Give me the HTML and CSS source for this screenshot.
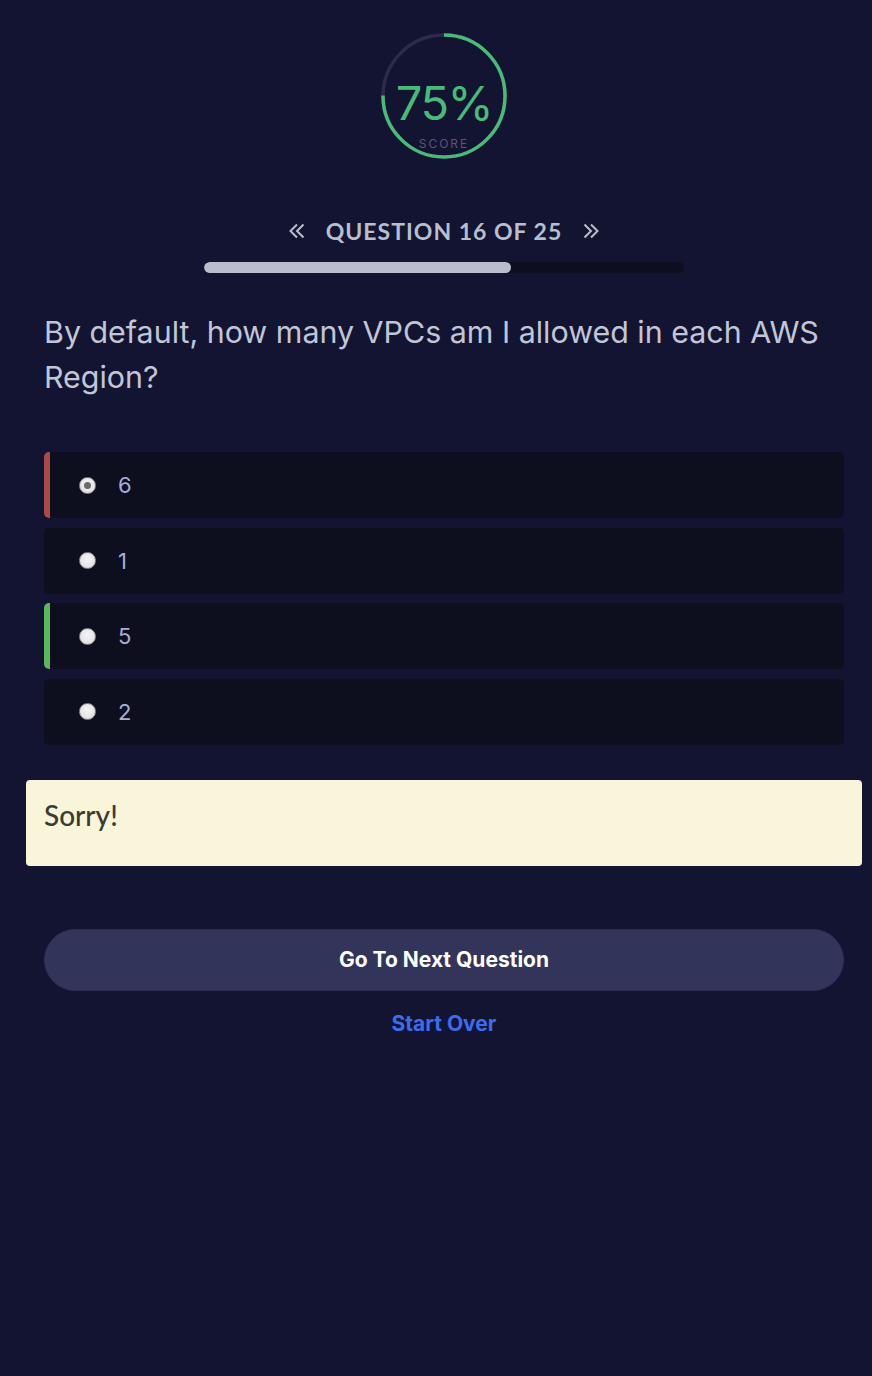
FILE: index.html
```html
<!DOCTYPE html>
<html lang="en">
<head>
<meta charset="utf-8">
<title>Quiz</title>
<link rel="stylesheet" href="styles.css">
</head>
<body>
<main class="quiz">
  <div class="score">
    <svg class="score-ring" width="130" height="130" viewBox="0 0 130 130">
      <circle cx="65" cy="65" r="61" fill="none" stroke="#2a2c4a" stroke-width="3.5"/>
      <circle cx="65" cy="65" r="61" fill="none" stroke="#48bb78" stroke-width="3.5"
        stroke-dasharray="287.46 383.27" transform="rotate(-90 65 65)"/>
    </svg>
    <div class="score-value">75%</div>
    <div class="score-label">SCORE</div>
  </div>

  <div class="nav">
    <svg class="chev" width="18" height="18" viewBox="0 0 18 18"><path d="M9 2.5 L2.5 9 L9 15.5 M15.5 2.5 L9 9 L15.5 15.5" fill="none" stroke="#b8bfcc" stroke-width="2"/></svg>
    <span class="nav-title">QUESTION 16 OF 25</span>
    <svg class="chev" width="18" height="18" viewBox="0 0 18 18"><path d="M2.5 2.5 L9 9 L2.5 15.5 M9 2.5 L15.5 9 L9 15.5" fill="none" stroke="#b8bfcc" stroke-width="2"/></svg>
  </div>
  <div class="progress"><div class="progress-fill" style="width:64%"></div></div>

  <h1 class="question">By default, how many VPCs am I allowed in each AWS Region?</h1>

  <ul class="options">
    <li class="option wrong"><span class="radio checked"></span><span class="opt-text">6</span></li>
    <li class="option"><span class="radio"></span><span class="opt-text">1</span></li>
    <li class="option right"><span class="radio"></span><span class="opt-text">5</span></li>
    <li class="option"><span class="radio"></span><span class="opt-text">2</span></li>
  </ul>

  <div class="feedback">Sorry!</div>

  <button class="next">Go To Next Question</button>
  <a class="restart" href="#">Start Over</a>
</main>
</body>
</html>
```

FILE: styles.css
```css
html, body {
  margin: 0;
  padding: 0;
  background: #131431;
  min-height: 100%;
}
body {
  font-family: Inter, "Noto Sans", sans-serif;
  color: #c1c6d6;
}
.quiz {
  display: flex;
  flex-direction: column;
  padding: 31px 28px 0 44px;
  width: 800px;
}
.score {
  position: relative;
  align-self: center;
  width: 130px;
  height: 130px;
}
.score-ring {
  display: block;
}
.score-value {
  position: absolute;
  left: 0;
  right: 0;
  top: 44px;
  text-align: center;
  font-size: 47px;
  font-weight: 400;
  line-height: 56px;
  color: #48bb78;
  letter-spacing: -1.5px;
}
.score-label {
  position: absolute;
  left: 0;
  right: 0;
  top: 105px;
  text-align: center;
  font-size: 12px;
  letter-spacing: 2px;
  color: #55587a;
  line-height: 16px;
}
.nav {
  margin-top: 56px;
  display: flex;
  justify-content: center;
  align-items: center;
  gap: 20px;
}
.chev { display: block; }
.nav-title {
  font-family: Lato, sans-serif;
  font-weight: 700;
  font-size: 23px;
  letter-spacing: 1px;
  color: #b8bfcc;
  line-height: 28px;
}
.progress {
  margin: 17px auto 0;
  width: 480px;
  height: 11px;
  border-radius: 6px;
  background: #0d0e1f;
  overflow: hidden;
}
.progress-fill {
  height: 100%;
  background: #b8bfca;
  border-radius: 6px;
}
.question {
  margin: 37px 0 0;
  font-size: 30.4px;
  font-weight: 400;
  line-height: 45px;
  color: #c1c6d6;
}
.options {
  list-style: none;
  margin: 52px 0 0;
  padding: 0;
  display: flex;
  flex-direction: column;
  gap: 9.5px;
}
.option {
  height: 66px;
  background: #0d0f1f;
  border-radius: 5px;
  display: flex;
  align-items: center;
  padding-left: 35px;
  box-sizing: border-box;
  gap: 22px;
}
.option.wrong { border-left: 6px solid #a94a4a; padding-left: 29px; }
.option.right { border-left: 6px solid #5cb85c; padding-left: 29px; }
.radio {
  width: 17px;
  height: 17px;
  border-radius: 50%;
  background: radial-gradient(circle at 50% 40%, #f4f4f4 0%, #e6e6e6 60%, #d0d0d0 100%);
  border: 1px solid #8c8c8c;
  box-sizing: border-box;
  position: relative;
  flex: none;
}
.radio.checked::after {
  content: "";
  position: absolute;
  left: 4px;
  top: 4px;
  width: 7px;
  height: 7px;
  border-radius: 50%;
  background: #6a6a6a;
}
.opt-text {
  font-size: 22px;
  color: #a9acd8;
  line-height: 28px;
}
.feedback {
  margin: 35px -18px 0;
  height: 86px;
  box-sizing: border-box;
  background: #f8f5da;
  border-radius: 4px;
  padding: 17px 18px;
  font-family: Lato, sans-serif;
  font-weight: 500;
  font-size: 28px;
  line-height: 36px;
  color: #3b3b33;
}
.next {
  margin-top: 63px;
  height: 62px;
  border-radius: 31px;
  background: #33345a;
  border: 1px solid #2c2d50;
  color: #ffffff;
  font-family: Inter, sans-serif;
  font-weight: 700;
  font-size: 21px;
  cursor: pointer;
}
.restart {
  margin-top: 19px;
  align-self: center;
  color: #3d6cf0;
  text-decoration: none;
  font-weight: 700;
  font-size: 21px;
  line-height: 28px;
}
```
